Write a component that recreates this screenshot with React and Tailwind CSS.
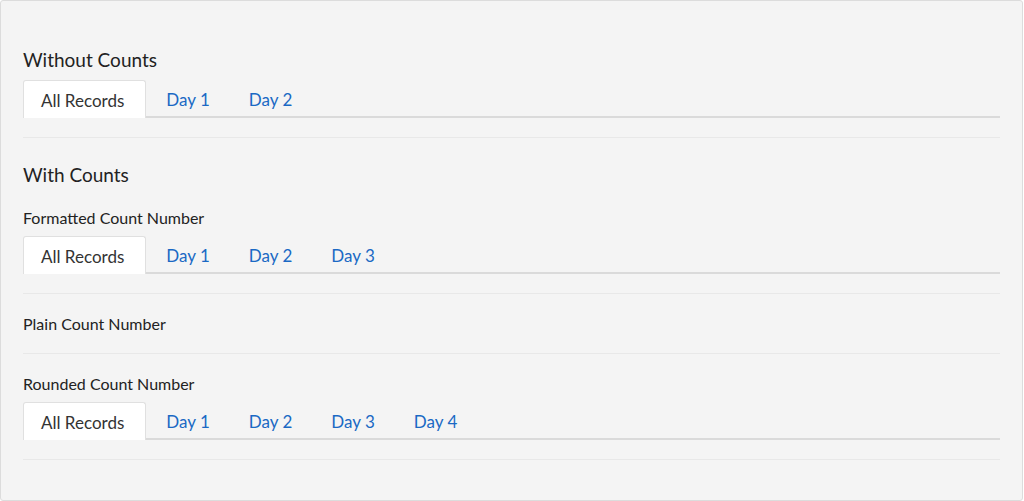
import React, { useState } from 'react';

const TabBar = ({ tabs }) => {
  const [active, setActive] = useState(0);
  return (
    <div className="flex border-b-2 border-[#dadada]">
      {tabs.map((t, i) => (
        <button
          key={t}
          onClick={() => setActive(i)}
          className={
            i === active
              ? 'h-[38px] -mb-[2px] pt-[2px] pl-[17px] pr-[21px] bg-white border border-b-0 border-[#e0e0e0] rounded-t-[3px] text-[17px] text-[#333]'
              : 'h-[38px] -mb-[2px] pt-[2px] pl-[20px] pr-[19px] text-[17px] text-[#1a69c4]'
          }
        >
          {t}
        </button>
      ))}
    </div>
  );
};

const Label = ({ children }) => (
  <div className="text-[16px] leading-[20px] text-[#222]">{children}</div>
);

const Heading = ({ children }) => (
  <div className="text-[19px] leading-[24px] text-[#222]">{children}</div>
);

const App = () => {
  return (
    <div className="w-[1023px] h-[501px] bg-[#f4f4f4] border border-[#dcdcdc] rounded-[3px] px-[22px] pt-[47px]" style={{ fontFamily: 'Lato, "Noto Sans", sans-serif' }}>
      <div className="pb-[19px] border-b border-[#e8e8e8]">
        <Heading>Without Counts</Heading>
        <div className="mt-[8px]">
          <TabBar tabs={['All Records', 'Day 1', 'Day 2']} />
        </div>
      </div>

      <div className="pt-[25px]">
        <Heading>With Counts</Heading>
      </div>

      <div className="pt-[21px] pb-[19px] border-b border-[#e8e8e8]">
        <Label>Formatted Count Number</Label>
        <div className="mt-[8px]">
          <TabBar tabs={['All Records', 'Day 1', 'Day 2', 'Day 3']} />
        </div>
      </div>

      <div className="pt-[20px] pb-[19px] border-b border-[#e8e8e8]">
        <Label>Plain Count Number</Label>
      </div>

      <div className="pt-[20px] pb-[19px] border-b border-[#e8e8e8]">
        <Label>Rounded Count Number</Label>
        <div className="mt-[8px]">
          <TabBar tabs={['All Records', 'Day 1', 'Day 2', 'Day 3', 'Day 4']} />
        </div>
      </div>
    </div>
  );
};

export default App;
